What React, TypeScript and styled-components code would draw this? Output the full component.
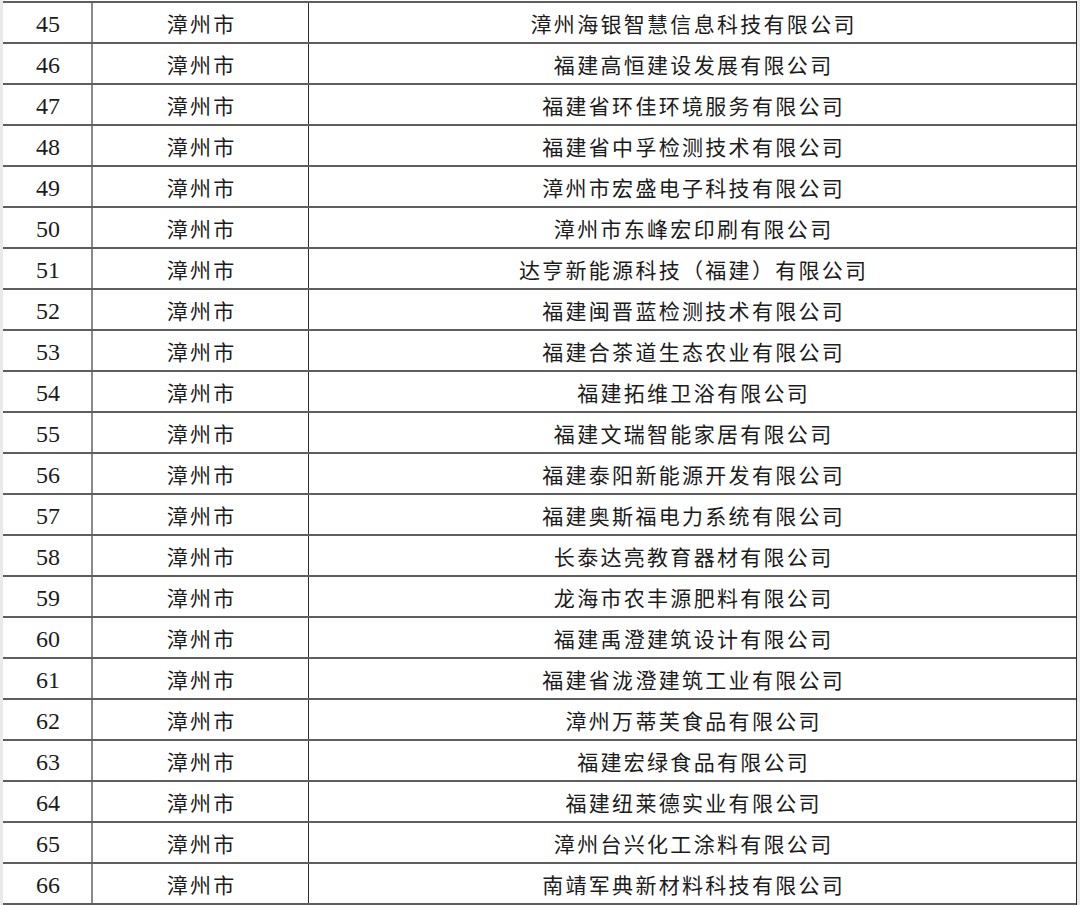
import { FC } from "react";
import styled, { createGlobalStyle } from "styled-components";

const GlobalStyle = createGlobalStyle`
  html, body {
    margin: 0;
    padding: 0;
    background: #ffffff;
  }
  body {
    font-family: "Liberation Serif", "Noto Sans CJK SC", serif;
    color: #1c1c1c;
    overflow: hidden;
  }
`;

const Page = styled.div`
  display: flex;
  width: 1080px;
  height: 905px;
  overflow: hidden;
  background: #ffffff;
`;

const Edge = styled.div<{ w: number }>`
  flex: 0 0 ${({ w }) => w}px;
  background: #e9e9e9;
`;

const Table = styled.div`
  flex: 0 0 1074px;
  margin-top: 1px;
  border-right: 1px solid #2e2e2e;
  box-sizing: border-box;
`;

const Row = styled.div`
  display: grid;
  grid-template-columns: 90px 216px 1fr;
  height: 41px;
  box-sizing: border-box;
  border-top: 2px solid #5e5e5e;
`;

const Cell = styled.div<{ divider?: "soft" | "hard" }>`
  display: flex;
  align-items: center;
  justify-content: center;
  box-sizing: border-box;
  padding-top: 1px;
  border-right: ${({ divider }) =>
    divider === "soft"
      ? "2px solid #8a8a8a"
      : divider === "hard"
      ? "1px solid #2e2e2e"
      : "none"};
`;

const Num = styled.span`
  font-family: "Liberation Serif", serif;
  font-size: 24px;
  margin-left: 2px;
  margin-top: 3px;
`;

const Zh = styled.span`
  font-family: "Noto Sans CJK SC", "Liberation Serif", sans-serif;
  font-size: 21px;
  font-weight: 400;
  letter-spacing: 2.3px;
  margin-right: -2.3px;
`;

interface IEntry {
  no: number;
  city: string;
  name: string;
}

const names = [
  "漳州海银智慧信息科技有限公司",
  "福建高恒建设发展有限公司",
  "福建省环佳环境服务有限公司",
  "福建省中孚检测技术有限公司",
  "漳州市宏盛电子科技有限公司",
  "漳州市东峰宏印刷有限公司",
  "达亨新能源科技（福建）有限公司",
  "福建闽晋蓝检测技术有限公司",
  "福建合茶道生态农业有限公司",
  "福建拓维卫浴有限公司",
  "福建文瑞智能家居有限公司",
  "福建泰阳新能源开发有限公司",
  "福建奥斯福电力系统有限公司",
  "长泰达亮教育器材有限公司",
  "龙海市农丰源肥料有限公司",
  "福建禹澄建筑设计有限公司",
  "福建省泷澄建筑工业有限公司",
  "漳州万蒂芙食品有限公司",
  "福建宏绿食品有限公司",
  "福建纽莱德实业有限公司",
  "漳州台兴化工涂料有限公司",
  "南靖军典新材料科技有限公司",
];

const entries: IEntry[] = names.map((name, i) => ({
  no: 45 + i,
  city: "漳州市",
  name,
}));

const TableRow: FC<{ data: IEntry }> = ({ data }) => (
  <Row>
    <Cell divider="soft">
      <Num>{data.no}</Num>
    </Cell>
    <Cell divider="hard">
      <Zh>{data.city}</Zh>
    </Cell>
    <Cell>
      <Zh>{data.name}</Zh>
    </Cell>
  </Row>
);

const LastLine = styled.div`
  border-top: 2px solid #5e5e5e;
`;

const App: FC = () => {
  return (
    <>
      <GlobalStyle />
      <Page>
        <Edge w={3} />
        <Table>
          {entries.map((item) => (
            <TableRow key={item.no} data={item} />
          ))}
          <LastLine />
        </Table>
        <Edge w={3} />
      </Page>
    </>
  );
};

export default App;
